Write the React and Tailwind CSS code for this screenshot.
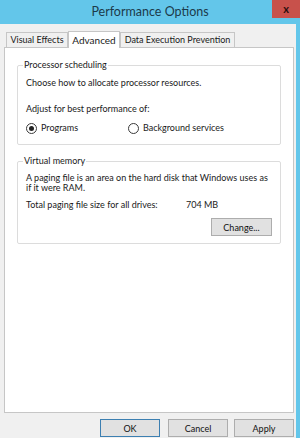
import React from 'react';

const font = { fontFamily: 'Lato, "Liberation Sans", sans-serif' };

const Radio = ({ checked, label }) => (
  <label className="flex items-center gap-[4px] h-[12px]">
    <span className="w-[11px] h-[11px] rounded-full border border-[#3a3a3a] bg-white flex items-center justify-center">
      {checked && <span className="w-[5px] h-[5px] rounded-full bg-[#222]"></span>}
    </span>
    <span>{label}</span>
  </label>
);

const Button = ({ children, primary, className = '' }) => (
  <button
    className={`h-[18px] bg-[#e1e1e1] border text-[9px] text-[#111] leading-none ${primary ? 'border-[#3c7fb1]' : 'border-[#adadad]'} ${className}`}
  >
    {children}
  </button>
);

export default function App() {
  return (
    <div className="w-[300px] h-[438px] bg-[#63c6ea] flex flex-col text-[9px] leading-[12px] text-[#1a1a1a]" style={font}>
      <div className="h-[24px] flex items-start shrink-0">
        <div className="flex-1 text-center text-[12.5px] leading-[16px] text-[#1c3a4a] pt-[4px] pl-[28px]">Performance Options</div>
        <div className="w-[28px] h-[18px] bg-[#c8514b] flex items-center justify-center text-[11px] font-bold text-[#2a0f0e]">x</div>
      </div>
      <div className="flex-1 bg-[#f0f0f0] mr-[4px] flex flex-col">
        <div className="flex items-end h-[23px] pl-[6px]">
          <div className="w-[62px] h-[15px] border border-b-0 border-[#c6c6c6] bg-[#f0f0f0] flex items-center justify-center">Visual Effects</div>
          <div className="w-[52px] h-[17px] border border-b-0 border-[#c6c6c6] bg-white flex justify-center pt-[2px] text-[10px] -mb-px relative">Advanced</div>
          <div className="w-[115px] h-[15px] border border-b-0 border-[#c6c6c6] bg-[#f0f0f0] flex items-center justify-center">Data Execution Prevention</div>
        </div>
        <div className="ml-[4px] mr-[2px] h-[366px] bg-white border border-[#c6c6c6] px-[12px] pt-[11px] flex flex-col gap-[10px]">
          <fieldset className="border border-[#dcdcdc] rounded-[2px] px-[8px] h-[86px]">
            <legend className="px-[1px] ml-[-3px]">Processor scheduling</legend>
            <div className="mt-[6px]">Choose how to allocate processor resources.</div>
            <div className="mt-[14px]">Adjust for best performance of:</div>
            <div className="flex mt-[7px]">
              <div className="w-[102px]"><Radio checked label="Programs" /></div>
              <Radio label="Background services" />
            </div>
          </fieldset>
          <fieldset className="border border-[#dcdcdc] rounded-[2px] px-[8px] h-[89px]">
            <legend className="px-[1px] ml-[-3px]">Virtual memory</legend>
            <div className="mt-[6px] leading-[10px]">A paging file is an area on the hard disk that Windows uses as if it were RAM.</div>
            <div className="flex mt-[6px]">
              <span className="w-[160px]">Total paging file size for all drives:</span>
              <span>704 MB</span>
            </div>
            <div className="flex justify-end mt-[7px]">
              <Button className="w-[61px]">Change...</Button>
            </div>
          </fieldset>
        </div>
        <div className="flex justify-end pr-[2px] pt-[6px]">
          <Button primary className="w-[60px] mr-[8px]">OK</Button>
          <Button className="w-[60px] mr-[6px]">Cancel</Button>
          <Button className="w-[60px]">Apply</Button>
        </div>
      </div>
    </div>
  );
}
